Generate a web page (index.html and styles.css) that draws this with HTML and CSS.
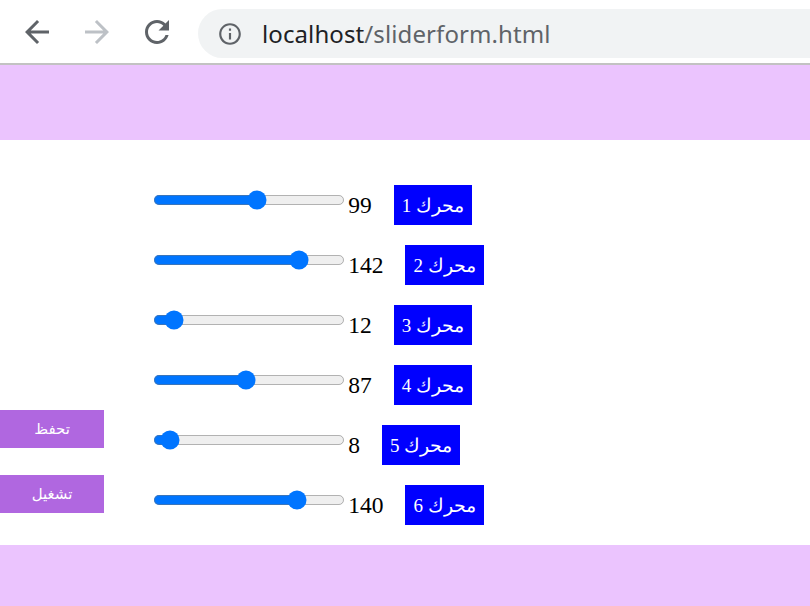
FILE: index.html
```html
<!DOCTYPE html>
<html lang="ar">
<head>
<meta charset="utf-8">
<title>sliderform</title>
<link rel="stylesheet" href="styles.css">
</head>
<body>
<div class="chrome">
  <div class="nav">
    <svg class="icon back" viewBox="0 0 24 24"><path d="M20 11H7.83l5.59-5.59L12 4l-8 8 8 8 1.41-1.41L7.83 13H20v-2z"/></svg>
    <svg class="icon fwd" viewBox="0 0 24 24"><path d="M4 11h12.17l-5.59-5.59L12 4l8 8-8 8-1.41-1.41L16.17 13H4v-2z"/></svg>
    <svg class="icon reload" viewBox="0 0 24 24"><path d="M17.65 6.35C16.2 4.9 14.21 4 12 4c-4.42 0-7.99 3.58-7.99 8s3.57 8 7.99 8c3.73 0 6.84-2.55 7.73-6h-2.08c-.82 2.33-3.04 4-5.65 4-3.31 0-6-2.69-6-6s2.69-6 6-6c1.66 0 3.14.69 4.22 1.78L13 11h7V4l-2.35 2.35z"/></svg>
  </div>
  <div class="omnibox">
    <svg class="info" viewBox="0 0 24 24"><path d="M11 7h2v2h-2zm0 4h2v6h-2zm1-9C6.48 2 2 6.48 2 12s4.48 10 10 10 10-4.48 10-10S17.52 2 12 2zm0 18c-4.41 0-8-3.59-8-8s3.59-8 8-8 8 3.59 8 8-3.59 8-8 8z"/></svg>
    <span class="url"><span class="host">localhost</span><span class="path">/sliderform.html</span></span>
  </div>
</div>
<header class="band"></header>
<main class="main">
  <div class="actions">
    <button class="action">تحفظ</button>
    <button class="action">تشغيل</button>
  </div>
  <div class="sliders">
    <div class="row"><input class="range" type="range" min="0" max="180" value="99"><span class="val">99</span><span class="motor" dir="rtl">محرك 1</span></div>
    <div class="row"><input class="range" type="range" min="0" max="180" value="142"><span class="val">142</span><span class="motor" dir="rtl">محرك 2</span></div>
    <div class="row"><input class="range" type="range" min="0" max="180" value="12"><span class="val">12</span><span class="motor" dir="rtl">محرك 3</span></div>
    <div class="row"><input class="range" type="range" min="0" max="180" value="87"><span class="val">87</span><span class="motor" dir="rtl">محرك 4</span></div>
    <div class="row"><input class="range" type="range" min="0" max="180" value="8"><span class="val">8</span><span class="motor" dir="rtl">محرك 5</span></div>
    <div class="row"><input class="range" type="range" min="0" max="180" value="140"><span class="val">140</span><span class="motor" dir="rtl">محرك 6</span></div>
  </div>
</main>
<footer class="band footer"></footer>
</body>
</html>
```
FILE: styles.css
```css
html, body {
  margin: 0;
  padding: 0;
  background: #ffffff;
  overflow: hidden;
}
body {
  width: 810px;
  height: 606px;
  font-family: "Liberation Serif", "DejaVu Serif", serif;
}
.chrome {
  height: 63px;
  border-bottom: 2px solid #c2c2c2;
  display: flex;
  align-items: center;
  background: #ffffff;
  overflow: hidden;
}
.nav {
  display: flex;
  align-items: center;
  gap: 24px;
  padding-left: 19px;
  width: 198px;
  flex: none;
  box-sizing: border-box;
}
.icon {
  width: 36px;
  height: 36px;
}
.back, .reload { fill: #5f6368; }
.fwd { fill: #bdc1c6; }
.omnibox {
  flex: 1;
  height: 49px;
  margin-top: 4px;
  background: #f1f3f4;
  border-radius: 25px 0 0 25px;
  display: flex;
  align-items: center;
  padding-left: 19px;
  gap: 19px;
}
.info {
  width: 26px;
  height: 26px;
  fill: #5f6368;
}
.url {
  font-family: "Noto Sans", "Open Sans", sans-serif;
  font-size: 24px;
  letter-spacing: 0.1px;
}
.host { color: #202124; }
.path { color: #5f6368; }
.band {
  height: 75px;
  background: #ebc4fe;
}
.footer { height: 61px; }
.main {
  height: 405px;
  display: flex;
}
.actions {
  width: 150px;
  padding-top: 270px;
  display: flex;
  flex-direction: column;
  gap: 27px;
  box-sizing: border-box;
}
.action {
  width: 104px;
  height: 38px;
  border: none;
  margin: 0;
  padding: 0;
  background: #b067e0;
  color: #ffffff;
  font-family: "DejaVu Sans", "Liberation Sans", sans-serif;
  font-size: 15px;
}
.sliders {
  padding-top: 45px;
  display: flex;
  flex-direction: column;
  gap: 20px;
}
.row {
  height: 40px;
  display: flex;
  align-items: center;
}
.range {
  zoom: 1.25;
  width: 154px;
  margin: 0 2.5px 8px 2px;
}
.val {
  font-size: 23.5px;
  color: #000000;
}
.motor {
  margin-left: 22px;
  height: 40px;
  line-height: 42px;
  padding: 0 8px;
  background: #0000ff;
  color: #ffffff;
  font-size: 19px;
}
```
